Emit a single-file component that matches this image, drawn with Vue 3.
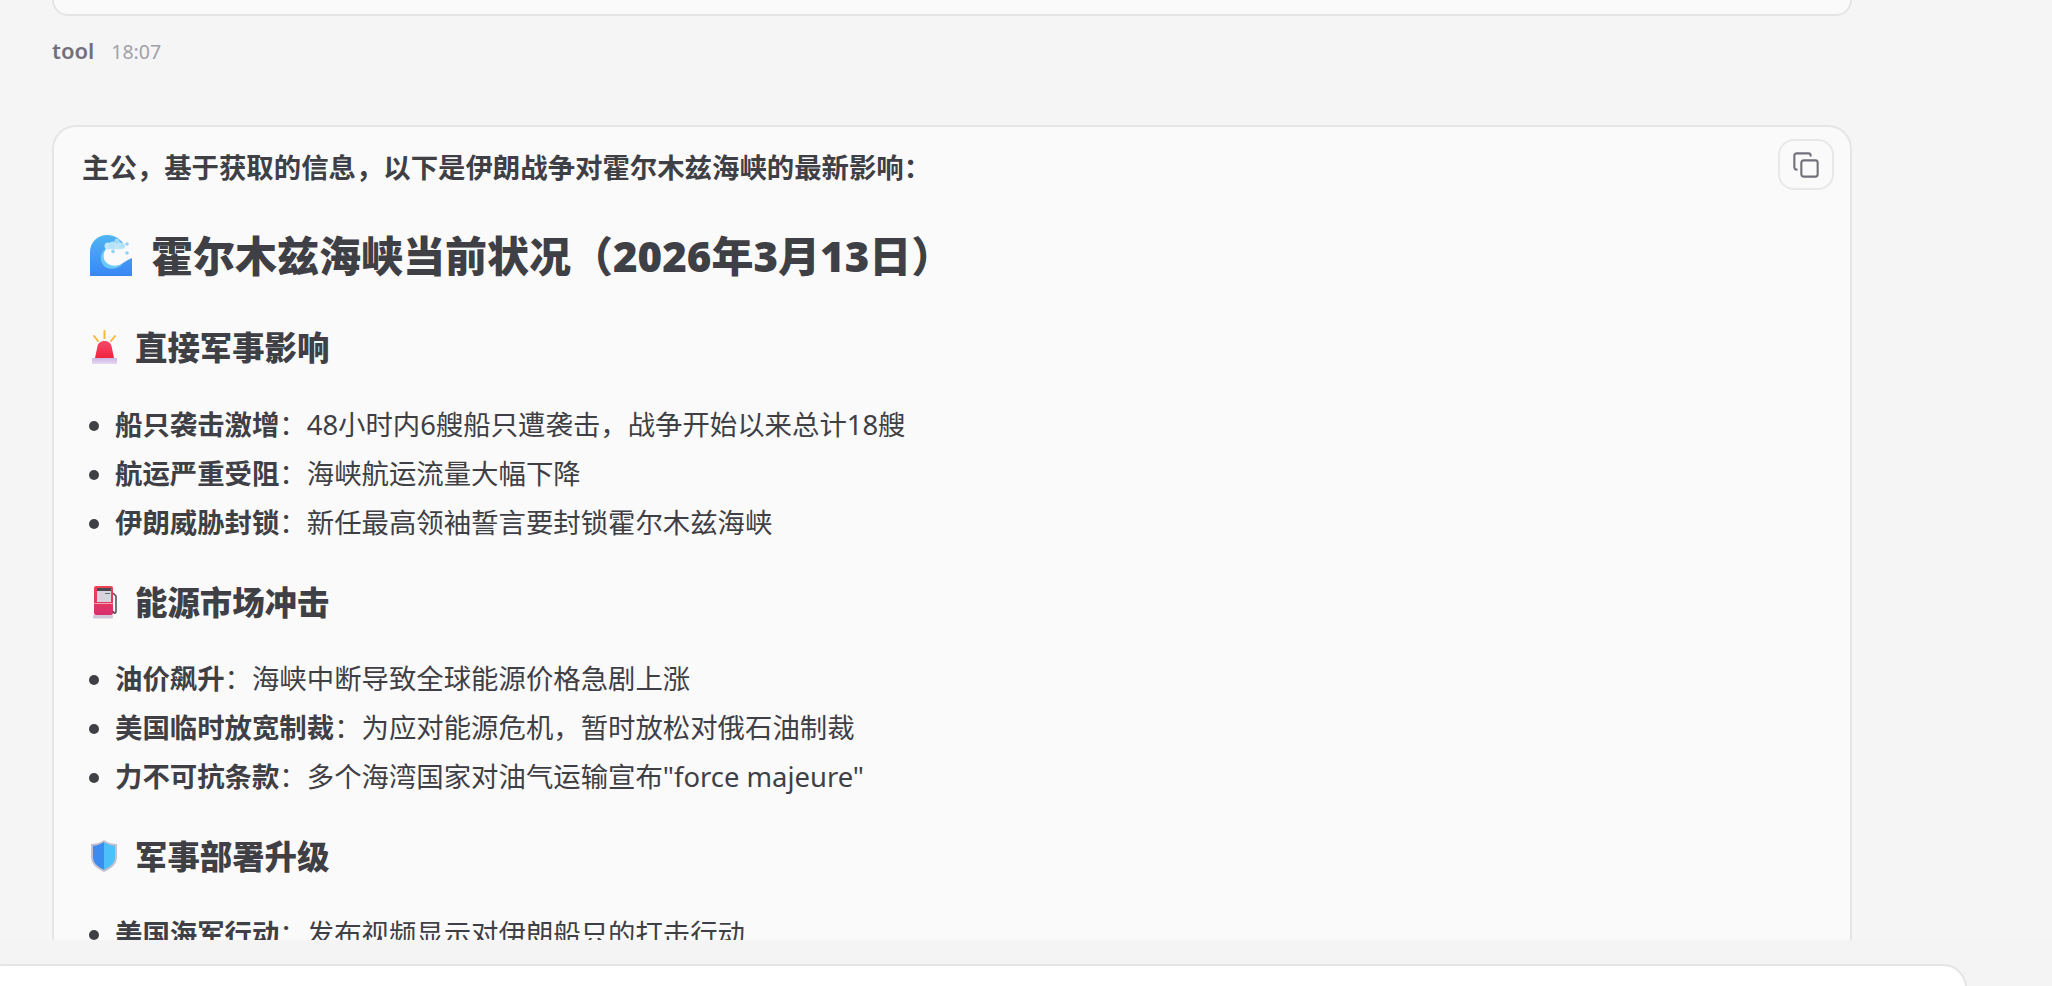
<script setup>
const sections = [
  {
    icon: 'siren',
    title: '直接军事影响',
    items: [
      { key: '船只袭击激增', text: '48小时内6艘船只遭袭击，战争开始以来总计18艘' },
      { key: '航运严重受阻', text: '海峡航运流量大幅下降' },
      { key: '伊朗威胁封锁', text: '新任最高领袖誓言要封锁霍尔木兹海峡' },
    ],
  },
  {
    icon: 'pump',
    title: '能源市场冲击',
    items: [
      { key: '油价飙升', text: '海峡中断导致全球能源价格急剧上涨' },
      { key: '美国临时放宽制裁', text: '为应对能源危机，暂时放松对俄石油制裁' },
      { key: '力不可抗条款', text: '多个海湾国家对油气运输宣布"force majeure"' },
    ],
  },
  {
    icon: 'shield',
    title: '军事部署升级',
    items: [
      { key: '美国海军行动', text: '发布视频显示对伊朗船只的打击行动' },
    ],
  },
]
</script>

<template>
  <div class="page">
    <main class="messages">
      <div class="prev-card"></div>

      <div class="meta">
        <span class="role">tool</span>
        <span class="time">18:07</span>
      </div>

      <article class="card">
        <button class="copy" type="button" aria-label="复制">
          <svg viewBox="0 0 24 24" width="28" height="28" fill="none" stroke="#71717a" stroke-width="1.8" stroke-linecap="round" stroke-linejoin="round">
            <rect x="8" y="8" width="14" height="14" rx="2" />
            <path d="M4 16c-1.100 0-2-.9-2-2V4c0-1.100.9-2 2-2h10c1.100 0 2 .9 2 2" />
          </svg>
        </button>

        <p class="intro">主公，基于获取的信息，以下是伊朗战争对霍尔木兹海峡的最新影响：</p>

        <h1 class="title">
          <svg class="title-icon" viewBox="0 0 42 42">
            <defs>
              <linearGradient id="wave" x1="0" y1="0" x2="0" y2="1">
                <stop offset="0" stop-color="#4fb4f2" />
                <stop offset="1" stop-color="#3a86f5" />
              </linearGradient>
            </defs>
            <path d="M0 41V17C0 7 8 0 17 0c7 0 12 3 16 8l-17 6c-4 4-4 11-1 14 4 5 13 4 18 0 3-2 6-4 9-5v18z" fill="url(#wave)" />
            <path d="M18 12c-8 4-10 14-3 20 5 3 13 2 18-3-7 3-15 2-18-3-3-5-1-11 3-14z" fill="#6cc8f5" />
            <circle cx="18" cy="11" r="3.500" fill="#bfe6fa" />
            <circle cx="23" cy="10.500" r="4" fill="#b5e2f9" />
            <circle cx="28" cy="10.500" r="4" fill="#bfe6fa" />
            <circle cx="32" cy="11" r="3" fill="#b5e2f9" />
            <circle cx="27" cy="6" r="2.500" fill="#9fd8f7" />
            <circle cx="37" cy="9" r="1.800" fill="#8fd2f6" />
            <circle cx="37" cy="18" r="1.800" fill="#8fd2f6" />
            <circle cx="23" cy="16.500" r="1.800" fill="#8fd2f6" />
          </svg>
          <span>霍尔木兹海峡当前状况（2026年3月13日）</span>
        </h1>

        <section v-for="section in sections" :key="section.title">
          <h3 class="heading">
            <svg v-if="section.icon === 'siren'" class="heading-icon" viewBox="0 0 32 36">
              <defs>
                <linearGradient id="siren" x1="0" y1="0" x2="0" y2="1">
                  <stop offset="0" stop-color="#f9476a" />
                  <stop offset="1" stop-color="#f0243f" />
                </linearGradient>
                <linearGradient id="siren-base" x1="0" y1="0" x2="0" y2="1">
                  <stop offset="0" stop-color="#cdb6e4" />
                  <stop offset="1" stop-color="#e6d8f2" />
                </linearGradient>
              </defs>
              <path d="M16.500 2v7M6 7l4 5M27 7l-4 5" stroke="#f5b83d" stroke-width="2" stroke-linecap="round" fill="none" />
              <path d="M7 29l2.500-12c.6-3 3.500-5 7-5s6.400 2 7 5L26 29z" fill="url(#siren)" />
              <rect x="4" y="29" width="25" height="6" rx="1" fill="url(#siren-base)" />
            </svg>
            <svg v-else-if="section.icon === 'pump'" class="heading-icon" viewBox="0 0 32 36">
              <defs>
                <linearGradient id="pump" x1="0" y1="0" x2="0" y2="1">
                  <stop offset="0" stop-color="#f04452" />
                  <stop offset="1" stop-color="#d92e6f" />
                </linearGradient>
              </defs>
              <rect x="6" y="2" width="19" height="29" rx="2" fill="url(#pump)" />
              <rect x="9" y="4" width="14" height="3" fill="#4a4a55" />
              <rect x="9" y="7" width="14" height="11" fill="#d8d4de" />
              <rect x="17" y="9" width="5" height="1" fill="#6a6a75" />
              <path d="M6 19.500h19" stroke="#f3a6ae" stroke-width="1" />
              <path d="M25 9l3 3v15c0 3-2.500 3-2.500 0" fill="none" stroke="#4a4a55" stroke-width="1.500" />
              <rect x="5" y="31" width="20" height="3.500" rx="1" fill="#cfc8d8" />
            </svg>
            <svg v-else class="heading-icon" viewBox="0 0 32 36">
              <path d="M16 2c4 3 9 4 13 4v13c0 8-7 12-13 15C10 31 3 27 3 19V6c4 0 9-1 13-4z" fill="#c3bfcc" />
              <path d="M16 4C12.500 6.500 8.500 7.500 5 7.800V19c0 6.500 5.500 10 11 12.800z" fill="#3b8bf0" />
              <path d="M16 4c3.500 2.500 7.500 3.500 11 3.800V19c0 6.500-5.500 10-11 12.800z" fill="#4cc0fb" />
            </svg>
            <span>{{ section.title }}</span>
          </h3>
          <ul class="list">
            <li v-for="item in section.items" :key="item.key">
              <strong>{{ item.key }}</strong>：{{ item.text }}
            </li>
          </ul>
        </section>
      </article>
    </main>

    <footer class="composer-wrap">
      <div class="composer"></div>
    </footer>
  </div>
</template>

<style>
html,
body {
  margin: 0;
  background: #f5f5f5;
}
</style>

<style scoped>
.page {
  height: 986px;
  overflow: hidden;
  background: #f5f5f5;
  color: #3f3f46;
  font-family: "Noto Sans", "Noto Sans CJK SC", sans-serif;
}

.messages {
  height: 940px;
  overflow: hidden;
  padding: 0 200px 0 52px;
  box-sizing: border-box;
}

.prev-card {
  height: 14px;
  background: #fafafa;
  border: 2px solid #e5e5e5;
  border-top: 0;
  border-radius: 0 0 24px 24px;
}

.meta {
  display: flex;
  align-items: baseline;
  gap: 17px;
  height: 109px;
  padding-top: 19px;
  box-sizing: border-box;
}

.role {
  font-size: 22px;
  font-weight: 600;
  color: #71717a;
}

.time {
  font-size: 19.500px;
  color: #a1a1aa;
}

.card {
  position: relative;
  padding: 16px 30px 0;
  background: #fafafa;
  border: 2px solid #e5e5e5;
  border-radius: 24px;
}

.copy {
  position: absolute;
  top: 12px;
  right: 16px;
  width: 56px;
  height: 51px;
  display: flex;
  align-items: center;
  justify-content: center;
  padding: 0;
  background: #fafafa;
  border: 2px solid #e8e8e8;
  border-radius: 16px;
}

.intro {
  margin: 0 0 0 -2px;
  font-size: 27.400px;
  line-height: 49px;
  font-weight: 700;
}

.title {
  display: flex;
  align-items: center;
  gap: 19px;
  margin: 36px 0 0;
  font-size: 42px;
  line-height: 56px;
  font-weight: 900;
}

.title-icon {
  width: 42px;
  height: 42px;
  margin-left: 6px;
  flex: none;
}

.heading {
  display: flex;
  align-items: center;
  gap: 15px;
  margin: 33px 0 0;
  font-size: 32.400px;
  line-height: 44px;
  font-weight: 900;
}

section:first-of-type .heading {
  margin-top: 41px;
}

.heading-icon {
  width: 32px;
  height: 36px;
  margin-left: 4px;
  flex: none;
}

.list {
  margin: 30.500px 0 0;
  padding: 0 0 0 31px;
  font-size: 27.400px;
  line-height: 49px;
}

.list strong {
  font-weight: 700;
}

.composer-wrap {
  height: 46px;
  padding-top: 24px;
  box-sizing: border-box;
  background: #f4f4f4;
}

.composer {
  width: 1987px;
  height: 60px;
  margin-left: -20px;
  background: #fff;
  border: 2px solid #e5e5e5;
  border-radius: 24px;
  box-sizing: border-box;
}
</style>
